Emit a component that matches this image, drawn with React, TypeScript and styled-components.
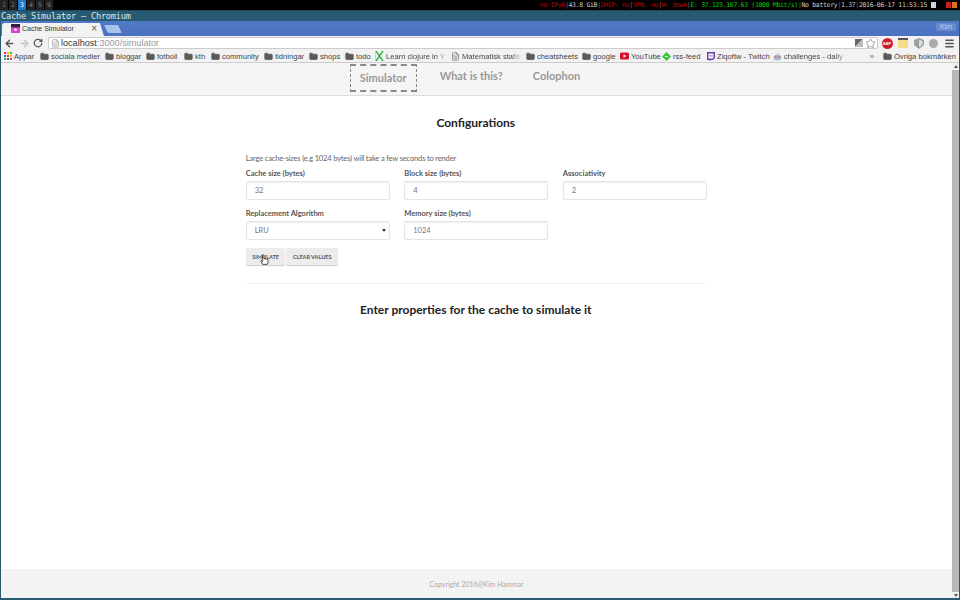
import React from "react";
import styled, { createGlobalStyle } from "styled-components";
import { ArrowLeft, ArrowRight, RotateCw, FileText, Star, Menu, Folder } from "lucide-react";

const GlobalStyle = createGlobalStyle`
  html, body {
    margin: 0;
    padding: 0;
    width: 960px;
    height: 600px;
    overflow: hidden;
    background: #fff;
  }
`;

const bookmarks: { label: string; width: number; icon: string; fade?: boolean }[] = [
  { label: "sociala medier", width: 65, icon: "folder" },
  { label: "bloggar", width: 41, icon: "folder" },
  { label: "fotboll", width: 38, icon: "folder" },
  { label: "kth", width: 27, icon: "folder" },
  { label: "community", width: 53, icon: "folder" },
  { label: "tidningar", width: 45, icon: "folder" },
  { label: "shops", width: 36, icon: "folder" },
  { label: "todo", width: 30, icon: "folder" },
  { label: "Learn clojure in Y", width: 76, icon: "x", fade: true },
  { label: "Matematisk statis", width: 75, icon: "file", fade: true },
  { label: "cheatsheets", width: 56, icon: "folder" },
  { label: "google", width: 38, icon: "folder" },
  { label: "YouTube", width: 42, icon: "yt" },
  { label: "rss-feed", width: 44, icon: "rss" },
  { label: "Ziqoftw - Twitch", width: 67, icon: "twitch" },
  { label: "challenges - daily", width: 78, icon: "reddit", fade: true },
];

const BookmarkIcon = ({ kind }: { kind: string }) => {
  if (kind === "folder") return <Folder size={9} fill="#5a5a5a" color="#5a5a5a" />;
  if (kind === "file") return <FileText size={9} color="#777" />;
  if (kind === "x")
    return (
      <svg width="9" height="10" viewBox="0 0 9 10">
        <path d="M1 0l7 10M8 0L1 10" stroke="#2fb344" strokeWidth="1.4" />
        <path d="M0 1v8" stroke="#66c0e0" strokeWidth="1" />
      </svg>
    );
  if (kind === "yt")
    return (
      <svg width="9" height="8" viewBox="0 0 9 8">
        <rect width="9" height="7" y="0.5" rx="1.5" fill="#d8102a" />
        <path d="M3.5 2.2l2.6 1.8-2.6 1.8z" fill="#fff" />
      </svg>
    );
  if (kind === "rss")
    return (
      <svg width="9" height="9" viewBox="0 0 9 9">
        <path d="M4.5 0L9 4.5 4.5 9 0 4.5z" fill="#3cc13c" />
        <path d="M3 4.5h3" stroke="#fff" strokeWidth="1" />
      </svg>
    );
  if (kind === "twitch")
    return (
      <svg width="9" height="9" viewBox="0 0 9 9">
        <path d="M1 0h8v6L7 8H5L3.5 9V8H1z" fill="#6441a4" />
        <path d="M2.5 1.5h5v4l-1 1h-4z" fill="#fff" />
        <path d="M4.2 2.8v2M6 2.8v2" stroke="#6441a4" strokeWidth="0.8" />
      </svg>
    );
  return (
    <svg width="9" height="9" viewBox="0 0 9 9">
      <ellipse cx="4.5" cy="5.5" rx="4" ry="3" fill="#a9bcd0" />
      <circle cx="3" cy="5" r="0.8" fill="#d8402a" />
      <circle cx="6" cy="5" r="0.8" fill="#d8402a" />
      <path d="M4.5 2.5L5.5 0.8" stroke="#8a9aad" strokeWidth="0.7" />
    </svg>
  );
};

const App = () => (
  <>
    <GlobalStyle />
    <Screen>
      <StatusBar>
        <Workspaces>
          {["1", "2", "3", "4", "5", "9"].map((n) => (
            <Workspace key={n} $active={n === "3"}>
              {n}
            </Workspace>
          ))}
        </Workspaces>
        <StatusItems>
          <Status $color="#c00000">no IPv6</Status>
          <Sep>|</Sep>
          <Status>43.8 GiB</Status>
          <Sep>|</Sep>
          <Status $color="#c00000">DHCP: no</Status>
          <Sep>|</Sep>
          <Status $color="#c00000">VPN: no</Status>
          <Sep>|</Sep>
          <Status $color="#c00000">W: down</Status>
          <Sep>|</Sep>
          <Status $color="#00d000">E: 37.123.167.63 (1000 Mbit/s)</Status>
          <Sep>|</Sep>
          <Status>No battery</Status>
          <Sep>|</Sep>
          <Status>1.37</Status>
          <Sep>|</Sep>
          <Status>2016-06-17 11:53:15</Status>
          <TrayIcons>
            <Tray $color="#c8d4e8" $push />
            <Tray $color="#c82020" />
            <Tray $color="#e07020" />
          </TrayIcons>
        </StatusItems>
      </StatusBar>

      <TitleBar>Cache Simulator — Chromium</TitleBar>

      <Window>
        <TabStrip>
          <Tab>
            <TabFavicon viewBox="0 0 8 8">
              <rect width="8" height="8" fill="#e040d0" />
              <rect width="8" height="3" fill="#30203a" />
              <rect x="3" y="4" width="2" height="2" fill="#fff" />
            </TabFavicon>
            <TabTitle>Cache Simulator</TabTitle>
            <TabClose>×</TabClose>
          </Tab>
          <NewTab />
          <ProfileBadge>Kim</ProfileBadge>
        </TabStrip>

        <Toolbar>
          <ArrowLeft size={11} color="#555" strokeWidth={3} />
          <ArrowRight size={11} color="#c4c4c4" strokeWidth={3} />
          <RotateCw size={10} color="#555" strokeWidth={3} />
          <Omnibox>
            <FileText size={9} color="#999" />
            <Url>
              localhost<UrlRest>:3000/simulator</UrlRest>
            </Url>
            <OmniIcons>
              <TranslateIcon />
              <Star size={11} color="#999" />
            </OmniIcons>
          </Omnibox>
          <Extensions>
            <AbpIcon>ABP</AbpIcon>
            <NoteIcon />
            <ShieldIcon viewBox="0 0 10 11">
              <path d="M5 0l5 2v5l-5 4-5-4V2z" fill="#9aa0a0" />
              <path d="M5 1.5l3.5 1.4v3.6L5 9.3z" fill="#d8dcdc" />
            </ShieldIcon>
            <DotIcon />
            <Menu size={11} color="#555" strokeWidth={3} />
          </Extensions>
        </Toolbar>

        <BookmarksBar>
          <AppsItem>
            <AppsGrid>
              {["#e33", "#fb0", "#4a4", "#36c", "#e33", "#fb0", "#4a4", "#36c", "#e33"].map((c, i) => (
                <AppsDot key={i} $color={c} />
              ))}
            </AppsGrid>
            Appar
          </AppsItem>
          {bookmarks.map((b) => (
            <Bookmark key={b.label} $width={b.width}>
              <BookmarkIcon kind={b.icon} />
              <BookmarkLabel $fade={b.fade}>{b.label}</BookmarkLabel>
            </Bookmark>
          ))}
          <Overflow>»</Overflow>
          <OtherBookmarks>
            <Folder size={9} fill="#5a5a5a" color="#5a5a5a" />
            Övriga bokmärken
          </OtherBookmarks>
        </BookmarksBar>

        <Viewport>
          <Page>
            <Nav>
              <NavItem $active>Simulator</NavItem>
              <NavItem>What is this?</NavItem>
              <NavItem>Colophon</NavItem>
            </Nav>

            <Main>
              <PageHeading>Configurations</PageHeading>
              <Form>
                <Hint>Large cache-sizes (e.g 1024 bytes) will take a few seconds to render</Hint>
                <FieldGrid>
                  <Field>
                    <FieldLabel>Cache size (bytes)</FieldLabel>
                    <Input readOnly value="32" />
                  </Field>
                  <Field>
                    <FieldLabel>Block size (bytes)</FieldLabel>
                    <Input readOnly value="4" />
                  </Field>
                  <Field>
                    <FieldLabel>Associativity</FieldLabel>
                    <Input readOnly value="2" />
                  </Field>
                  <Field>
                    <FieldLabel>Replacement Algorithm</FieldLabel>
                    <FakeSelect>
                      LRU
                      <Caret />
                    </FakeSelect>
                  </Field>
                  <Field>
                    <FieldLabel>Memory size (bytes)</FieldLabel>
                    <Input readOnly value="1024" />
                  </Field>
                </FieldGrid>
                <Buttons>
                  <ActionButton>
                    SIMULATE
                    <HandCursor viewBox="0 0 10 12">
                      <path
                        d="M3 1.2c0-.9 1.4-.9 1.4 0V5l3 .6c1 .2 1.6.8 1.6 1.8v2l-1 2H3L1 8.2c-.5-.8.4-1.5 1.1-.9l.9.9z"
                        fill="#fff"
                        stroke="#222"
                        strokeWidth="0.9"
                      />
                    </HandCursor>
                  </ActionButton>
                  <ActionButton>CLEAR VALUES</ActionButton>
                </Buttons>
                <Divider />
              </Form>
              <ResultHeading>Enter properties for the cache to simulate it</ResultHeading>
            </Main>

            <Footer>Copyright 2016@Kim Hammar</Footer>
          </Page>
          <Scrollbar>
            <ScrollArrow $up />
            <ScrollThumb />
            <ScrollArrow />
          </Scrollbar>
        </Viewport>
      </Window>
    </Screen>
  </>
);

export default App;

const Screen = styled.div`
  width: 960px;
  height: 600px;
  display: flex;
  flex-direction: column;
  overflow: hidden;
`;

const StatusBar = styled.div`
  height: 10px;
  flex: none;
  background: #000;
  display: flex;
  justify-content: space-between;
  font: 6.5px/10px "DejaVu Sans Mono", monospace;
  color: #ccc;
`;

const Workspaces = styled.div`
  display: flex;
  gap: 1px;
`;

const Workspace = styled.div<{ $active?: boolean }>`
  width: 8px;
  text-align: center;
  background: ${(p) => (p.$active ? "#1f78c8" : "#222")};
  color: ${(p) => (p.$active ? "#fff" : "#777")};
`;

const StatusItems = styled.div`
  display: flex;
  align-items: center;
  letter-spacing: -0.33px;
  white-space: nowrap;
`;

const Status = styled.span<{ $color?: string }>`
  color: ${(p) => p.$color || "#ccc"};
`;

const Sep = styled.span`
  color: #777;
`;

const TrayIcons = styled.div`
  display: flex;
  gap: 1px;
  margin: 0 3px 0 4px;
  width: 26px;
`;

const Tray = styled.i<{ $color: string; $push?: boolean }>`
  width: 5px;
  height: 6px;
  background: ${(p) => p.$color};
  margin-right: ${(p) => (p.$push ? "auto" : "0")};
`;

const TitleBar = styled.div`
  height: 11px;
  flex: none;
  background: #285a72;
  border-top: 1px solid #1d4558;
  box-sizing: border-box;
  color: #dfe8ee;
  font: 8.6px/10px "DejaVu Sans Mono", monospace;
  letter-spacing: -0.18px;
  padding-left: 1px;
  white-space: nowrap;
`;

const Window = styled.div`
  flex: 1;
  min-height: 0;
  display: flex;
  flex-direction: column;
  border-left: 1px solid #285a72;
  border-right: 1px solid #285a72;
  border-bottom: 2px solid #285a72;
`;

const TabStrip = styled.div`
  height: 15px;
  flex: none;
  background: linear-gradient(#5079c8, #4a72bf);
  display: flex;
  align-items: flex-end;
  padding-left: 1px;
  position: relative;
`;

const Tab = styled.div`
  width: 102px;
  height: 13px;
  background: #f2f2f2;
  border-radius: 3px 3px 0 0;
  clip-path: polygon(0 0, 96% 0, 100% 100%, 0 100%);
  display: flex;
  align-items: center;
  gap: 2px;
  padding: 0 7px 2px 9px;
  box-sizing: border-box;
  font: 7px "Liberation Sans", sans-serif;
  color: #333;
`;

const TabFavicon = styled.svg`
  width: 9px;
  height: 9px;
`;

const TabTitle = styled.span`
  flex: 1;
  white-space: nowrap;
`;

const TabClose = styled.span`
  font-size: 10px;
  color: #555;
`;

const NewTab = styled.div`
  width: 14px;
  height: 8px;
  margin: 0 0 3px 2px;
  background: #a9c4ea;
  transform: skewX(25deg);
  border-radius: 1px;
`;

const ProfileBadge = styled.div`
  position: absolute;
  right: 3px;
  top: 2px;
  width: 20px;
  height: 8px;
  border-radius: 2px;
  background: #6a8cca;
  color: #c3d1ec;
  font: 7px/8px "Liberation Sans", sans-serif;
  text-align: center;
`;

const Toolbar = styled.div`
  height: 14px;
  flex: none;
  background: #f2f2f2;
  display: flex;
  align-items: center;
  padding-left: 3px;
  gap: 3.5px;
`;

const Omnibox = styled.div`
  width: 830px;
  height: 12px;
  margin-left: 1.5px;
  background: #fff;
  border: 1px solid #ccc;
  border-radius: 2px;
  box-sizing: border-box;
  display: flex;
  align-items: center;
  padding: 0 1px 0 2px;
  gap: 1px;
`;

const Url = styled.span`
  flex: 1;
  font: 9.1px "Liberation Sans", sans-serif;
  color: #333;
`;

const UrlRest = styled.span`
  color: #999;
`;

const OmniIcons = styled.div`
  display: flex;
  align-items: center;
  gap: 2px;
`;

const TranslateIcon = styled.i`
  width: 8px;
  height: 8px;
  background: linear-gradient(135deg, #666 50%, #bbb 50%);
`;

const Extensions = styled.div`
  display: flex;
  align-items: center;
  gap: 5.5px;
`;

const AbpIcon = styled.div`
  width: 11px;
  height: 11px;
  border-radius: 50%;
  background: #cc1f2b;
  color: #fff;
  font: bold 4px/11px "Liberation Sans", sans-serif;
  text-align: center;
`;

const NoteIcon = styled.i`
  width: 10px;
  height: 10px;
  background: #f3dc8c;
  border-top: 2px solid #555;
  box-sizing: border-box;
`;

const ShieldIcon = styled.svg`
  width: 10px;
  height: 11px;
`;

const DotIcon = styled.i`
  width: 9px;
  height: 9px;
  border-radius: 50%;
  background: #aaa;
`;

const BookmarksBar = styled.div`
  height: 13px;
  flex: none;
  background: #f2f2f2;
  display: flex;
  align-items: center;
  padding-left: 3px;
  font: 7.6px "Liberation Sans", sans-serif;
  color: #444;
  white-space: nowrap;
  border-bottom: 1px solid #ccc;
  box-sizing: border-box;
`;

const AppsItem = styled.div`
  display: flex;
  align-items: center;
  gap: 2px;
  width: 36px;
  flex: none;
`;

const AppsGrid = styled.div`
  display: grid;
  grid-template-columns: repeat(3, 2px);
  grid-auto-rows: 2px;
  gap: 1px;
`;

const AppsDot = styled.i<{ $color: string }>`
  background: ${(p) => p.$color};
`;

const Bookmark = styled.div<{ $width: number }>`
  display: flex;
  align-items: center;
  gap: 2px;
  flex: none;
  width: ${(p) => p.$width}px;
`;

const BookmarkLabel = styled.span<{ $fade?: boolean }>`
  display: block;
  overflow: hidden;
  flex: 1;
  ${(p) =>
    p.$fade &&
    `
    margin-right: 4px;
    -webkit-mask-image: linear-gradient(to right, #000 82%, transparent);
    mask-image: linear-gradient(to right, #000 82%, transparent);
  `}
`;

const Overflow = styled.span`
  margin-left: auto;
  color: #666;
`;

const OtherBookmarks = styled.div`
  display: flex;
  align-items: center;
  gap: 2px;
  margin: 0 3px 0 9px;
`;

const Viewport = styled.div`
  flex: 1;
  min-height: 0;
  display: flex;
`;

const Page = styled.div`
  flex: 1;
  min-width: 0;
  display: flex;
  flex-direction: column;
  font-family: Lato, sans-serif;
`;

const Nav = styled.nav`
  height: 32px;
  flex: none;
  background: #f5f5f5;
  border-bottom: 1px solid #ddd;
  display: flex;
  justify-content: center;
  align-items: flex-start;
  padding-right: 8px;
`;

const NavItem = styled.a<{ $active?: boolean }>`
  font-size: 11px;
  font-weight: 700;
  color: #999;
  line-height: 14px;
  padding: 6px 15px 0;
  ${(p) =>
    p.$active &&
    `
    margin: 1px 8px 0 0;
    padding: 5px 9px 5px;
    border: 1.5px dashed #888;
    border-top-width: 2px;
    border-bottom-width: 2px;
  `}
`;

const Main = styled.main`
  flex: 1;
  display: flex;
  flex-direction: column;
  align-items: center;
  padding-right: 1.5px;
`;

const PageHeading = styled.h2`
  margin: 18px 0 0;
  font-size: 12px;
  line-height: 18px;
  font-weight: 700;
  color: #222;
`;

const Form = styled.div`
  width: 460px;
  margin-top: 20px;
`;

const Hint = styled.p`
  margin: 0;
  font-size: 7.6px;
  letter-spacing: -0.2px;
  line-height: 12px;
  color: #666;
`;

const FieldGrid = styled.div`
  display: grid;
  grid-template-columns: repeat(3, 144px);
  column-gap: 14.5px;
  row-gap: 8px;
  margin-top: 4px;
`;

const Field = styled.div`
  display: flex;
  flex-direction: column;
  gap: 1px;
`;

const FieldLabel = styled.label`
  font-size: 7.5px;
  line-height: 12px;
  font-weight: 700;
  color: #555;
`;

const Input = styled.input`
  height: 19px;
  border: 1px solid #e4e4e4;
  border-radius: 2px;
  box-sizing: border-box;
  padding: 0 8px;
  font: 7.5px Lato, sans-serif;
  color: #777;
  box-shadow: inset 0 1px 2px rgba(0, 0, 0, 0.06);
  outline: none;
`;

const FakeSelect = styled.div`
  height: 19px;
  border: 1px solid #e4e4e4;
  border-radius: 2px;
  box-sizing: border-box;
  padding: 0 3px 0 8px;
  font-size: 7.5px;
  line-height: 17px;
  color: #777;
  display: flex;
  justify-content: space-between;
  align-items: center;
  box-shadow: inset 0 1px 2px rgba(0, 0, 0, 0.06);
`;

const Caret = styled.i`
  border: 2px solid transparent;
  border-top: 3px solid #333;
  border-bottom: none;
`;

const Buttons = styled.div`
  display: flex;
  gap: 1px;
  margin-top: 8px;
`;

const ActionButton = styled.button`
  position: relative;
  height: 17px;
  padding: 0 6.5px;
  border: none;
  border-radius: 2px;
  background: #ececec;
  box-shadow: 0 1px 1px rgba(0, 0, 0, 0.2);
  font: 700 5.5px Lato, sans-serif;
  color: #555;
`;

const HandCursor = styled.svg`
  position: absolute;
  left: 14px;
  top: 6px;
  width: 9px;
  height: 11px;
`;

const Divider = styled.hr`
  border: none;
  border-top: 1px solid #eee;
  margin: 18px 0 0;
`;

const ResultHeading = styled.h2`
  margin: 17px 0 0;
  font-size: 12px;
  line-height: 18px;
  font-weight: 700;
  color: #222;
`;

const Footer = styled.footer`
  height: 29px;
  flex: none;
  background: #f3f3f3;
  color: #aaa;
  font-size: 7px;
  line-height: 30px;
  text-align: center;
`;

const Scrollbar = styled.div`
  width: 7px;
  flex: none;
  background: #f0f0f0;
  display: flex;
  flex-direction: column;
  padding: 2px 0 1px;
  box-sizing: border-box;
`;

const ScrollThumb = styled.div`
  flex: 1;
  background: #b8b8b8;
  margin-top: 2px;
`;

const ScrollArrow = styled.i<{ $up?: boolean }>`
  margin: ${(p) => (p.$up ? "0 auto" : "2px auto 0")};
  border: 2px solid transparent;
  ${(p) => (p.$up ? "border-bottom: 3px solid #555; border-top: none;" : "border-top: 3px solid #555; border-bottom: none;")}
`;
